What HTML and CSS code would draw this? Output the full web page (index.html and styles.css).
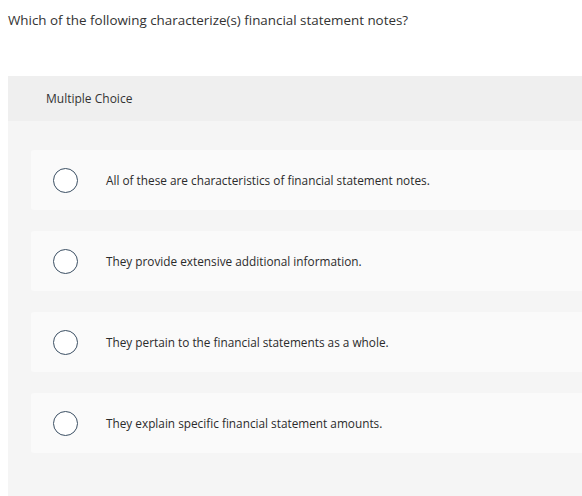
FILE: index.html
```html
<!DOCTYPE html>
<html>
<head>
<meta charset="utf-8">
<link rel="stylesheet" href="styles.css">
</head>
<body>
<div class="question">Which of the following characterize(s) financial statement notes?</div>
<div class="panel">
  <div class="panel-header">Multiple Choice</div>
  <div class="options">
    <div class="option"><span class="radio"></span><span class="label">All of these are characteristics of financial statement notes.</span></div>
    <div class="option"><span class="radio"></span><span class="label">They provide extensive additional information.</span></div>
    <div class="option"><span class="radio"></span><span class="label">They pertain to the financial statements as a whole.</span></div>
    <div class="option"><span class="radio"></span><span class="label">They explain specific financial statement amounts.</span></div>
  </div>
</div>
</body>
</html>
```
FILE: styles.css
```css
html, body {
  margin: 0;
  padding: 0;
  background: #ffffff;
  overflow: hidden;
}
body {
  font-family: "Open Sans", "Liberation Sans", sans-serif;
  color: #2b2b2b;
  width: 582px;
  height: 496px;
}
.question {
  font-size: 13.4px;
  line-height: 20px;
  padding: 10px 0 0 8px;
  color: #333;
}
.panel {
  margin: 46px 0 0 8px;
  background: #f5f5f5;
  height: 420px;
  width: 600px;
}
.panel-header {
  background: #efefef;
  height: 45px;
  display: flex;
  align-items: center;
  padding-left: 38px;
  font-size: 12px;
  color: #333;
}
.options {
  display: flex;
  flex-direction: column;
  gap: 21px;
  padding: 29px 0 0 23px;
}
.option {
  background: #fafafa;
  height: 60px;
  border-radius: 3px;
  display: flex;
  align-items: center;
  padding-left: 22px;
}
.radio {
  width: 23px;
  height: 23px;
  border: 1.5px solid #3b4f63;
  border-radius: 50%;
  background: #ffffff;
  flex: none;
}
.label {
  margin-left: 28px;
  font-size: 11.8px;
  color: #2b2b2b;
}
```
